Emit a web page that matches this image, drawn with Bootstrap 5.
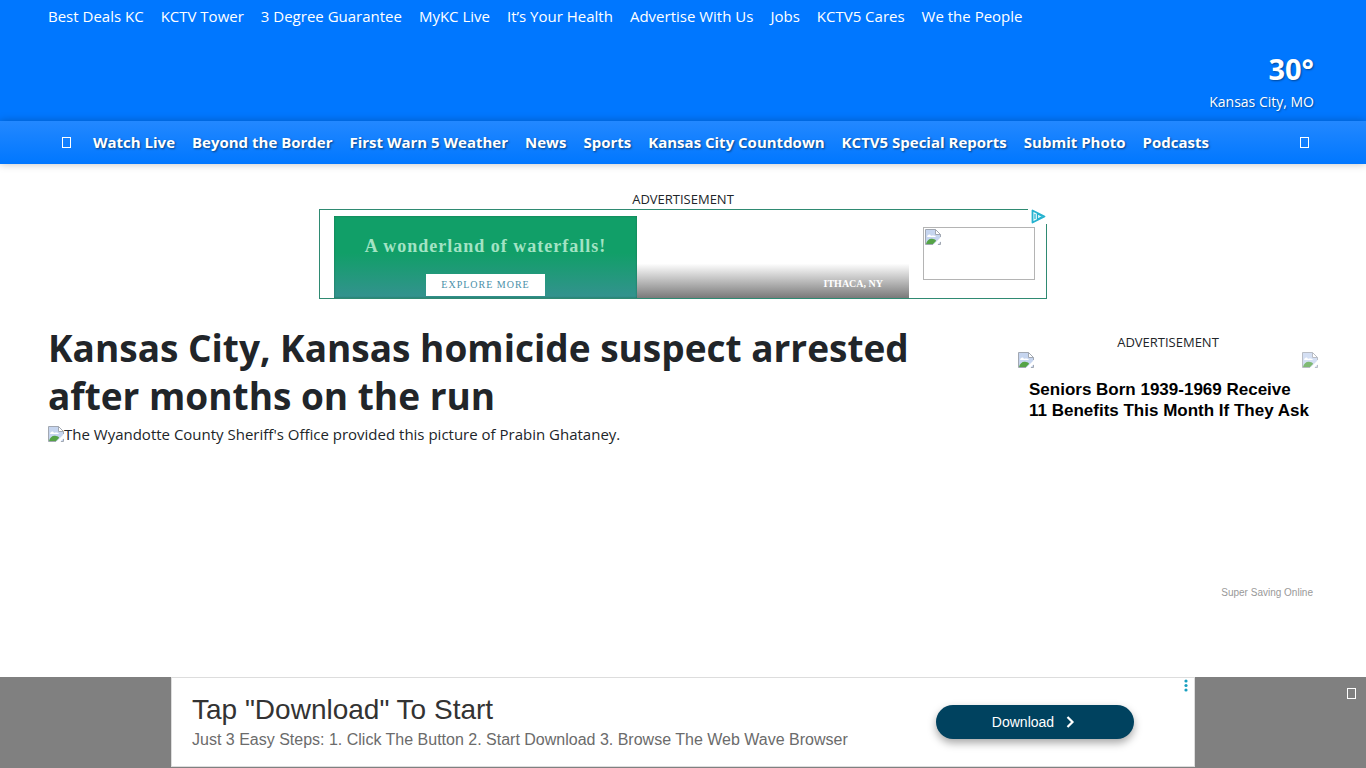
<!DOCTYPE html>
<html lang="en">
<head>
<meta charset="utf-8">
<meta name="viewport" content="width=device-width, initial-scale=1">
<title>Kansas City, Kansas homicide suspect arrested after months on the run</title>
<link href="https://cdn.jsdelivr.net/npm/bootstrap@5.3.0/dist/css/bootstrap.min.css" rel="stylesheet">
<style>
body { font-family: "Open Sans", "Noto Sans", sans-serif; color: #212529; }
a { color: inherit; text-decoration: none; }
.sans { font-family: "Liberation Sans", Arial, sans-serif; }
.serif { font-family: "Liberation Serif", serif; }
.masthead { background: #07f; color: #fff; }
.link-row { column-gap: 17px; }
.top-links { font-size: 15px; line-height: 24px; padding-top: 4px; }
.weather { padding-top: 20px; padding-bottom: 8px; text-shadow: 1px 1px 2px rgba(0,0,0,.4); }
.temp { font-size: 29px; line-height: 42px; font-weight: 700; }
.city { font-size: 14px; line-height: 23px; }
.mainnav { background: linear-gradient(#2388ff, #07f); color: #fff; font-size: 15px; line-height: 24px; font-weight: 700; padding: 9px 57px 10px 62px; box-shadow: 0 0 8px rgba(0,0,0,.25); position: relative; }
.mainnav a { text-shadow: 1px 1px 2px rgba(0,0,0,.5); }
.tofu { width: 9px; height: 11px; border: 1px solid currentColor; display: block; }
.glyph-btn { background: none; border: 0; padding: 0; color: #fff; }
.menu-btn { margin-right: 22px; }
.ad-label { font-size: 13px; line-height: 20px; text-align: center; }
.top-ad { padding: 25px 0; }
.leader { max-width: 728px; height: 90px; border: 1px solid #2f8a72; padding: 6px 11px 0 14px; position: relative; }
.falls { width: 303px; background: linear-gradient(#119f68 45%, #34928f); box-shadow: inset 0 0 2px #1c6b4c; padding-top: 20px; }
.falls-title { font-size: 18px; line-height: 20px; letter-spacing: 1px; color: #a3e3c4; }
.explore { font-size: 10px; line-height: 22px; letter-spacing: 1px; color: #4a8fa8; background: #fff; border: 0; width: 119px; padding: 0; margin-top: 18px; }
.photo { flex: 1 1 0; background: linear-gradient(transparent 58%, #7a7a7a); color: #fff; font-size: 10px; line-height: 12px; padding: 0 26px 8px 0; }
.logo-box { width: 112px; height: 53px; border: 1px solid #b4b4b4; margin: 11px 0 0 14px; padding: 1px; }
.choices { position: absolute; top: -1px; right: -1px; width: 19px; height: 15px; background: #fff; }
.choices svg, .broken { display: block; flex: none; }
.headline { font-size: 37px; line-height: 48px; font-weight: 700; }
.caption { font-size: 15px; line-height: 24px; padding-top: 2px; }
.rail { width: 300px; flex: none; padding-top: 8px; }
.rail-title { font-size: 17px; line-height: 21px; font-weight: 700; color: #000; padding: 11px 0 0 11px; }
.sponsor { font-size: 10px; line-height: 12px; color: #999; padding: 166px 5px 0 0; }
.sticky-ad { background: #808080; padding-bottom: 1px; }
.banner { width: 1024px; max-width: 100%; height: 90px; background: #fff; border: 1px solid #ddd; padding: 0 60px 0 20px; position: relative; }
.banner-title { font-size: 28px; line-height: 32px; color: #333; }
.banner-text { font-size: 16px; line-height: 20px; color: #6b6b6b; margin-top: 4px; }
.download { width: 198px; height: 34px; background: #00425f; color: #fff; font-size: 14px; border: 0; box-shadow: 0 4px 8px rgba(0,0,0,.35); flex: none; }
.dots { position: absolute; top: 1px; right: 5px; }
.close-ad { position: absolute; top: 11px; right: 10px; }
</style>
</head>
<body>
<svg class="d-none">
  <symbol id="broken" viewBox="0 0 16 16">
    <path d="M.5.5h10l5 5v10H.5z" fill="#c6d5ef"/>
    <path d="M2 8c1-3 3-3 4-1 2-1 5 0 5 1z" fill="#fff"/>
    <path d="M1 15c1-4 4-6 7-5 2 0 3 1 3 2l-3 3z" fill="#55a346"/>
    <path d="M8 16l8-8v4l-4 4z" fill="#fff"/>
    <path d="M.5 15.500V.5h10l5 5V8M.5 15.500H8M13 15.500h2.500V13" fill="none" stroke="#a2a8b2"/>
    <path d="M10.500.5v5h5z" fill="#fff" stroke="#a2a8b2"/>
  </symbol>
</svg>

<header class="masthead">
  <nav class="top-links link-row d-flex flex-wrap px-5" aria-label="Featured">
    <a href="#">Best Deals KC</a><a href="#">KCTV Tower</a><a href="#">3 Degree Guarantee</a><a href="#">MyKC Live</a><a href="#">It’s Your Health</a><a href="#">Advertise With Us</a><a href="#">Jobs</a><a href="#">KCTV5 Cares</a><a href="#">We the People</a>
  </nav>
  <div class="weather d-flex flex-column align-items-end ps-5 pe-5 me-1">
    <div class="temp">30°</div>
    <div class="city">Kansas City, MO</div>
  </div>
</header>
<nav class="mainnav d-flex align-items-center" aria-label="Main">
  <button class="glyph-btn menu-btn" aria-label="Menu"><span class="tofu"></span></button>
  <div class="link-row d-flex flex-wrap flex-grow-1">
    <a href="#">Watch Live</a><a href="#">Beyond the Border</a><a href="#">First Warn 5 Weather</a><a href="#">News</a><a href="#">Sports</a><a href="#">Kansas City Countdown</a><a href="#">KCTV5 Special Reports</a><a href="#">Submit Photo</a><a href="#">Podcasts</a>
  </div>
  <button class="glyph-btn" aria-label="Search"><span class="tofu"></span></button>
</nav>

<section class="top-ad">
  <div class="ad-label">ADVERTISEMENT</div>
  <div class="leader d-flex mx-auto serif">
    <div class="falls text-center">
      <div class="falls-title fw-bold">A wonderland of waterfalls!</div>
      <button class="explore">EXPLORE MORE</button>
    </div>
    <div class="photo d-flex align-items-end justify-content-end fw-bold">ITHACA, NY</div>
    <div class="logo-box"><svg class="broken" width="16" height="16"><use href="#broken"/></svg></div>
    <a class="choices" href="#" aria-label="AdChoices"><svg width="19" height="15" viewBox="0 0 19 15"><path d="M4.500 1.500v12l12-6z" fill="#e4f8fc" stroke="#25b2cf" stroke-width="1.800" stroke-linejoin="round"/><path d="M7 5v5M9.500 4.500v6l4.500-3z" fill="none" stroke="#25b2cf" stroke-width="1.200"/></svg></a>
  </div>
</section>

<main class="d-flex gap-5 px-5">
  <article class="flex-grow-1">
    <h1 class="headline mb-0">Kansas City, Kansas homicide suspect arrested after months on the run</h1>
    <div class="caption d-flex align-items-center"><svg class="broken" width="16" height="16"><use href="#broken"/></svg>The Wyandotte County Sheriff's Office provided this picture of Prabin Ghataney.</div>
  </article>
  <aside class="rail">
    <div class="ad-label">ADVERTISEMENT</div>
    <div class="sans">
      <div class="d-flex justify-content-between"><svg class="broken" width="16" height="16"><use href="#broken"/></svg><svg class="broken opacity-75" width="16" height="16"><use href="#broken"/></svg></div>
      <a class="rail-title d-block" href="#">Seniors Born 1939-1969 Receive<br>11 Benefits This Month If They Ask</a>
      <div class="sponsor text-end">Super Saving Online</div>
    </div>
  </aside>
</main>

<div class="sticky-ad fixed-bottom sans">
  <div class="banner d-flex align-items-center justify-content-between mx-auto">
    <div>
      <div class="banner-title">Tap "Download" To Start</div>
      <div class="banner-text">Just 3 Easy Steps: 1. Click The Button 2. Start Download 3. Browse The Web Wave Browser</div>
    </div>
    <button class="download rounded-pill d-flex align-items-center justify-content-center gap-2">Download <svg width="16" height="12" viewBox="0 0 16 12"><path d="M5.500 1l5 5-5 5" fill="none" stroke="#fff" stroke-width="2.200"/></svg></button>
    <a class="dots d-flex" href="#" aria-label="Ad options"><svg width="6" height="13" viewBox="0 0 6 13" fill="#189fbf"><circle cx="3" cy="2" r="1.600"/><circle cx="3" cy="6.500" r="1.600"/><circle cx="3" cy="11" r="1.600"/></svg></a>
  </div>
  <button class="glyph-btn close-ad" aria-label="Close"><span class="tofu"></span></button>
</div>
<script src="https://cdn.jsdelivr.net/npm/bootstrap@5.3.0/dist/js/bootstrap.bundle.min.js"></script>
</body>
</html>
